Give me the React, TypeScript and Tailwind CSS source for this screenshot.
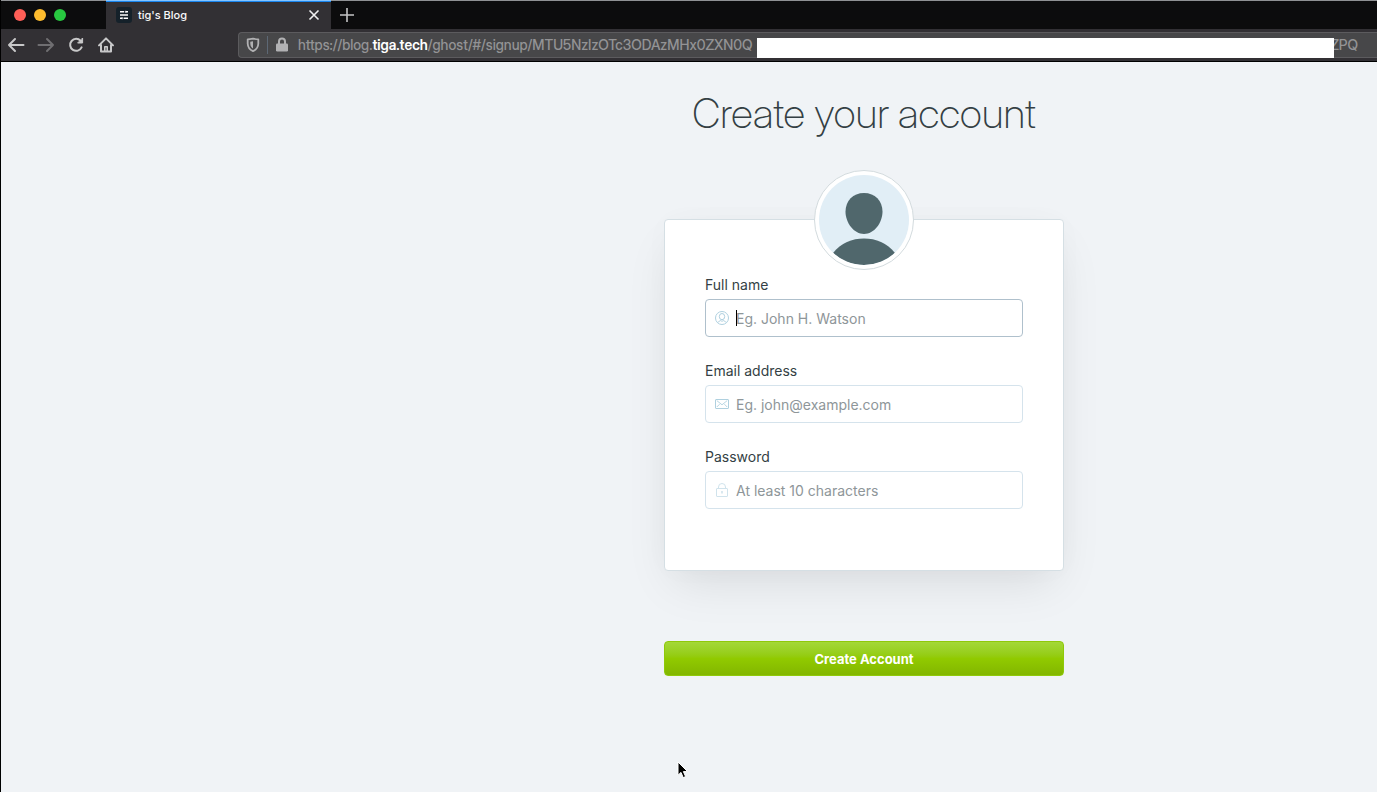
import { ReactNode } from "react";

const UserIcon = () => (
  <svg viewBox="0 0 14 14" className="w-[14px] h-[14px]" fill="none" stroke="#afd0df">
    <circle cx="7" cy="7" r="6.5" />
    <ellipse cx="7" cy="5.6" rx="2.7" ry="3.1" />
    <path d="M2.6 11.6C3.6 10.2 5 10.1 5.6 9.6C6.4 10.3 7.6 10.3 8.4 9.6C9 10.1 10.4 10.2 11.4 11.6" />
  </svg>
);

const MailIcon = () => (
  <svg viewBox="0 0 14 14" className="w-[14px] h-[14px]" fill="none" stroke="#afd0df">
    <rect x="0.5" y="2.5" width="13" height="9" rx="0.5" />
    <path d="M1.8 3.6L7 7.8L12.2 3.6M1.8 10L4.6 7.2M12.2 10L9.4 7.2" strokeWidth="0.9" />
  </svg>
);

const LockIcon = () => (
  <svg viewBox="0 0 14 14" className="w-[14px] h-[14px]" fill="none" stroke="#d0e3ec">
    <rect x="1.5" y="5.5" width="11" height="8" rx="0.5" />
    <path d="M3.5 5.5V4A3.5 3.5 0 0 1 10.5 4V5.5" />
    <path d="M7 8V10.5" strokeWidth="1.6" />
  </svg>
);

const PadlockIcon = () => (
  <svg viewBox="0 0 14 16" className="w-[14px] h-[16px] shrink-0">
    <path d="M4 7V4.6A3 3 0 0 1 10 4.6V7" fill="none" stroke="#b1b1b3" strokeWidth="2" />
    <rect x="1" y="6.5" width="12" height="8" rx="1.2" fill="#b1b1b3" />
  </svg>
);

const ShieldIcon = () => (
  <svg viewBox="0 0 14 16" className="w-[14px] h-[16px] shrink-0">
    <path
      d="M7 1.6C5 2 3 2.3 1.7 2.3V6.8C1.9 10.6 4 12.9 7 14.2C10 12.9 12.1 10.6 12.3 6.8V2.3C11 2.3 9 2 7 1.6Z"
      fill="none"
      stroke="#b1b1b3"
      strokeWidth="1.8"
      strokeLinejoin="round"
    />
    <path d="M7 4.2L4.3 4.7V7C4.5 9.2 5.5 10.6 7 11.5Z" fill="#b1b1b3" />
  </svg>
);

const NavButton = ({
  label,
  color,
  children,
}: {
  label: string;
  color: string;
  children: ReactNode;
}) => (
  <button aria-label={label} className="w-[18px] h-[18px]">
    <svg
      viewBox="0 0 18 18"
      className="w-[18px] h-[18px]"
      fill="none"
      stroke={color}
      strokeWidth="2"
      strokeLinecap="round"
      strokeLinejoin="round"
    >
      {children}
    </svg>
  </button>
);

const fields = [
  {
    id: "name",
    label: "Full name",
    type: "text",
    placeholder: "Eg. John H. Watson",
    icon: <UserIcon />,
    active: true,
  },
  {
    id: "email",
    label: "Email address",
    type: "email",
    placeholder: "Eg. john@example.com",
    icon: <MailIcon />,
    active: false,
  },
  {
    id: "password",
    label: "Password",
    type: "password",
    placeholder: "At least 10 characters",
    icon: <LockIcon />,
    active: false,
  },
];

const TabStrip = () => (
  <div className="flex h-[29px] border-t border-[#8f9194] bg-[#0c0c0d]">
    <div className="flex items-center gap-2 w-[105px] pl-[13px]">
      <span className="w-3 h-3 rounded-full bg-[#ff5f57]" />
      <span className="w-3 h-3 rounded-full bg-[#febc2e]" />
      <span className="w-3 h-3 rounded-full bg-[#28c840]" />
    </div>
    <div className="flex items-center w-[225px] -mt-px px-[10px] border-t border-[#84c4ff] bg-[#323034] shadow-[inset_0_1px_0_#1a86ee]">
      <svg viewBox="0 0 16 16" className="w-4 h-4 mr-[6px]">
        <rect width="16" height="16" rx="3" fill="#15212a" />
        <path
          d="M4 4.8H8.2M9.8 4.8H12M4 8H12M4 11.2H6M7.6 11.2H12"
          stroke="#fff"
          strokeWidth="1.4"
        />
        <path d="M9.8 3.8V5.8M6.2 10.2V12.2" stroke="#fff" strokeWidth="1" />
      </svg>
      <span className="flex-1 text-[11px] leading-4 font-medium text-[#f9f9fa]">tig's Blog</span>
      <button aria-label="Close tab">
        <svg viewBox="0 0 14 14" className="w-[14px] h-[14px]">
          <path d="M2.5 2.5L11.5 11.5M11.5 2.5L2.5 11.5" stroke="#f0f0f1" strokeWidth="1.6" />
        </svg>
      </button>
    </div>
    <button aria-label="New tab" className="pl-2">
      <svg viewBox="0 0 16 16" className="w-4 h-4">
        <path d="M8 1V15M1 8H15" stroke="#c4c4c5" strokeWidth="1.6" />
      </svg>
    </button>
  </div>
);

const Toolbar = () => (
  <div className="flex items-center h-[33px] border-b border-black bg-[#323034]">
    <div className="flex gap-3 w-[237px] pl-[6px]">
      <NavButton label="Back" color="#c8c8c9">
        <path d="M16.5 9H2M8 3L2 9L8 15" />
      </NavButton>
      <NavButton label="Forward" color="#6f6e71">
        <path d="M1.5 9H16M10 3L16 9L10 15" />
      </NavButton>
      <NavButton label="Reload" color="#c8c8c9">
        <path d="M14.6 11.4A6 6 0 1 1 13.6 4.8" />
        <path d="M15.6 2.4V7H11Z" fill="#c8c8c9" strokeWidth="1" />
      </NavButton>
      <NavButton label="Home" color="#c8c8c9">
        <path d="M2 9.4L9 2.4L16 9.4M4 9V15.4H14V9" />
        <path d="M7.8 15V10.8H10.2V15" strokeWidth="1.6" />
      </NavButton>
    </div>
    <div className="flex flex-1 items-center h-[26px] pl-[7px] pr-[19px] border border-r-0 border-[#5c5b5e] rounded-l bg-[#474749] font-['Inter_Display','Liberation_Sans',sans-serif] text-[14px] leading-5 font-medium text-[#939395]">
      <ShieldIcon />
      <span className="w-px h-[18px] mx-[7px] bg-[#5d6875]" />
      <PadlockIcon />
      <div
        role="textbox"
        aria-label="Address"
        className="flex flex-1 items-center ml-[9px] whitespace-nowrap"
      >
        <span>
          https://blog.<span className="font-semibold text-white">tiga.tech</span>
          /ghost/#/signup/MTU5NzIzOTc3ODAzMHx0ZXN0Q
        </span>
        <span className="relative flex-1 h-5 mt-[6px] ml-1 -mr-1 bg-white" />
        <span>ZPQ</span>
      </div>
    </div>
  </div>
);

const Avatar = () => (
  <div className="w-[100px] h-[100px] p-1 -mt-[50px] mx-auto mb-[5px] rounded-full border border-[#d3dbde] bg-white">
    <svg viewBox="0 0 90 90" className="w-full h-full rounded-full bg-[#e1eef6]">
      <path
        d="M45 18C56 18 63.5 26 63.5 36.5C63.5 48 55 59 45 59C35 59 26.5 48 26.5 36.5C26.5 26 34 18 45 18Z"
        fill="#50676c"
      />
      <path d="M14 78C22 68 33 63.5 45 63.5C57 63.5 68 68 76 78C68 86 57 90 45 90C33 90 22 86 14 78Z" fill="#50676c" />
    </svg>
  </div>
);

const App = () => {
  return (
    <div className="flex flex-col min-h-screen border-l border-black bg-[#f0f3f6] font-['Inter','Liberation_Sans',sans-serif]">
      <TabStrip />
      <Toolbar />
      <main className="flex-1 pl-[350px] pt-6">
        <h1 className="text-center font-['Inter_Display','Roboto',sans-serif] text-[41px] leading-[54px] font-extralight text-[#343f44]">
          Create your account
        </h1>
        <form className="w-[400px] mx-auto mt-[79px]" onSubmit={(e) => e.preventDefault()}>
          <div className="px-10 pb-[61px] rounded border border-[#d5dfe4] bg-white shadow-[0_20px_45px_-10px_rgba(0,0,0,0.1),0_0_30px_rgba(60,40,80,0.02)]">
            <Avatar />
            <div className="flex flex-col gap-6">
              {fields.map((field) => (
                <div key={field.id}>
                  <label
                    htmlFor={field.id}
                    className="block mb-1 text-[14px] leading-5 text-[#343f44]"
                  >
                    {field.label}
                  </label>
                  <div className="relative">
                    <span className="absolute left-[10px] top-3">{field.icon}</span>
                    <input
                      id={field.id}
                      type={field.type}
                      placeholder={field.placeholder}
                      className={`block w-full h-[38px] pl-[30px] pr-3 rounded border bg-transparent text-[14px] leading-5 outline-none placeholder:text-[#8e9699] ${
                        field.active ? "border-[#afc0cc]" : "border-[#d5e3ec]"
                      }`}
                    />
                    {field.active && (
                      <span className="absolute left-[31px] top-[11px] w-px h-4 bg-black" />
                    )}
                  </div>
                </div>
              ))}
            </div>
          </div>
          <button
            type="submit"
            className="w-full h-[35px] mt-[70px] rounded border border-[#8fc90a] bg-linear-to-b from-[#a4d837] via-[#91ca00] to-[#82b600] text-[13px] leading-5 font-bold text-white"
          >
            Create Account
          </button>
        </form>
      </main>
      <svg viewBox="0 0 12 18" className="fixed left-[677px] top-[761px] w-3 h-[18px]">
        <path
          d="M1 1V14.2L4 11.4L6.2 16.6L8.6 15.6L6.4 10.6H10.6Z"
          fill="#000"
          stroke="#fff"
          strokeWidth="1"
        />
      </svg>
    </div>
  );
};

export default App;
